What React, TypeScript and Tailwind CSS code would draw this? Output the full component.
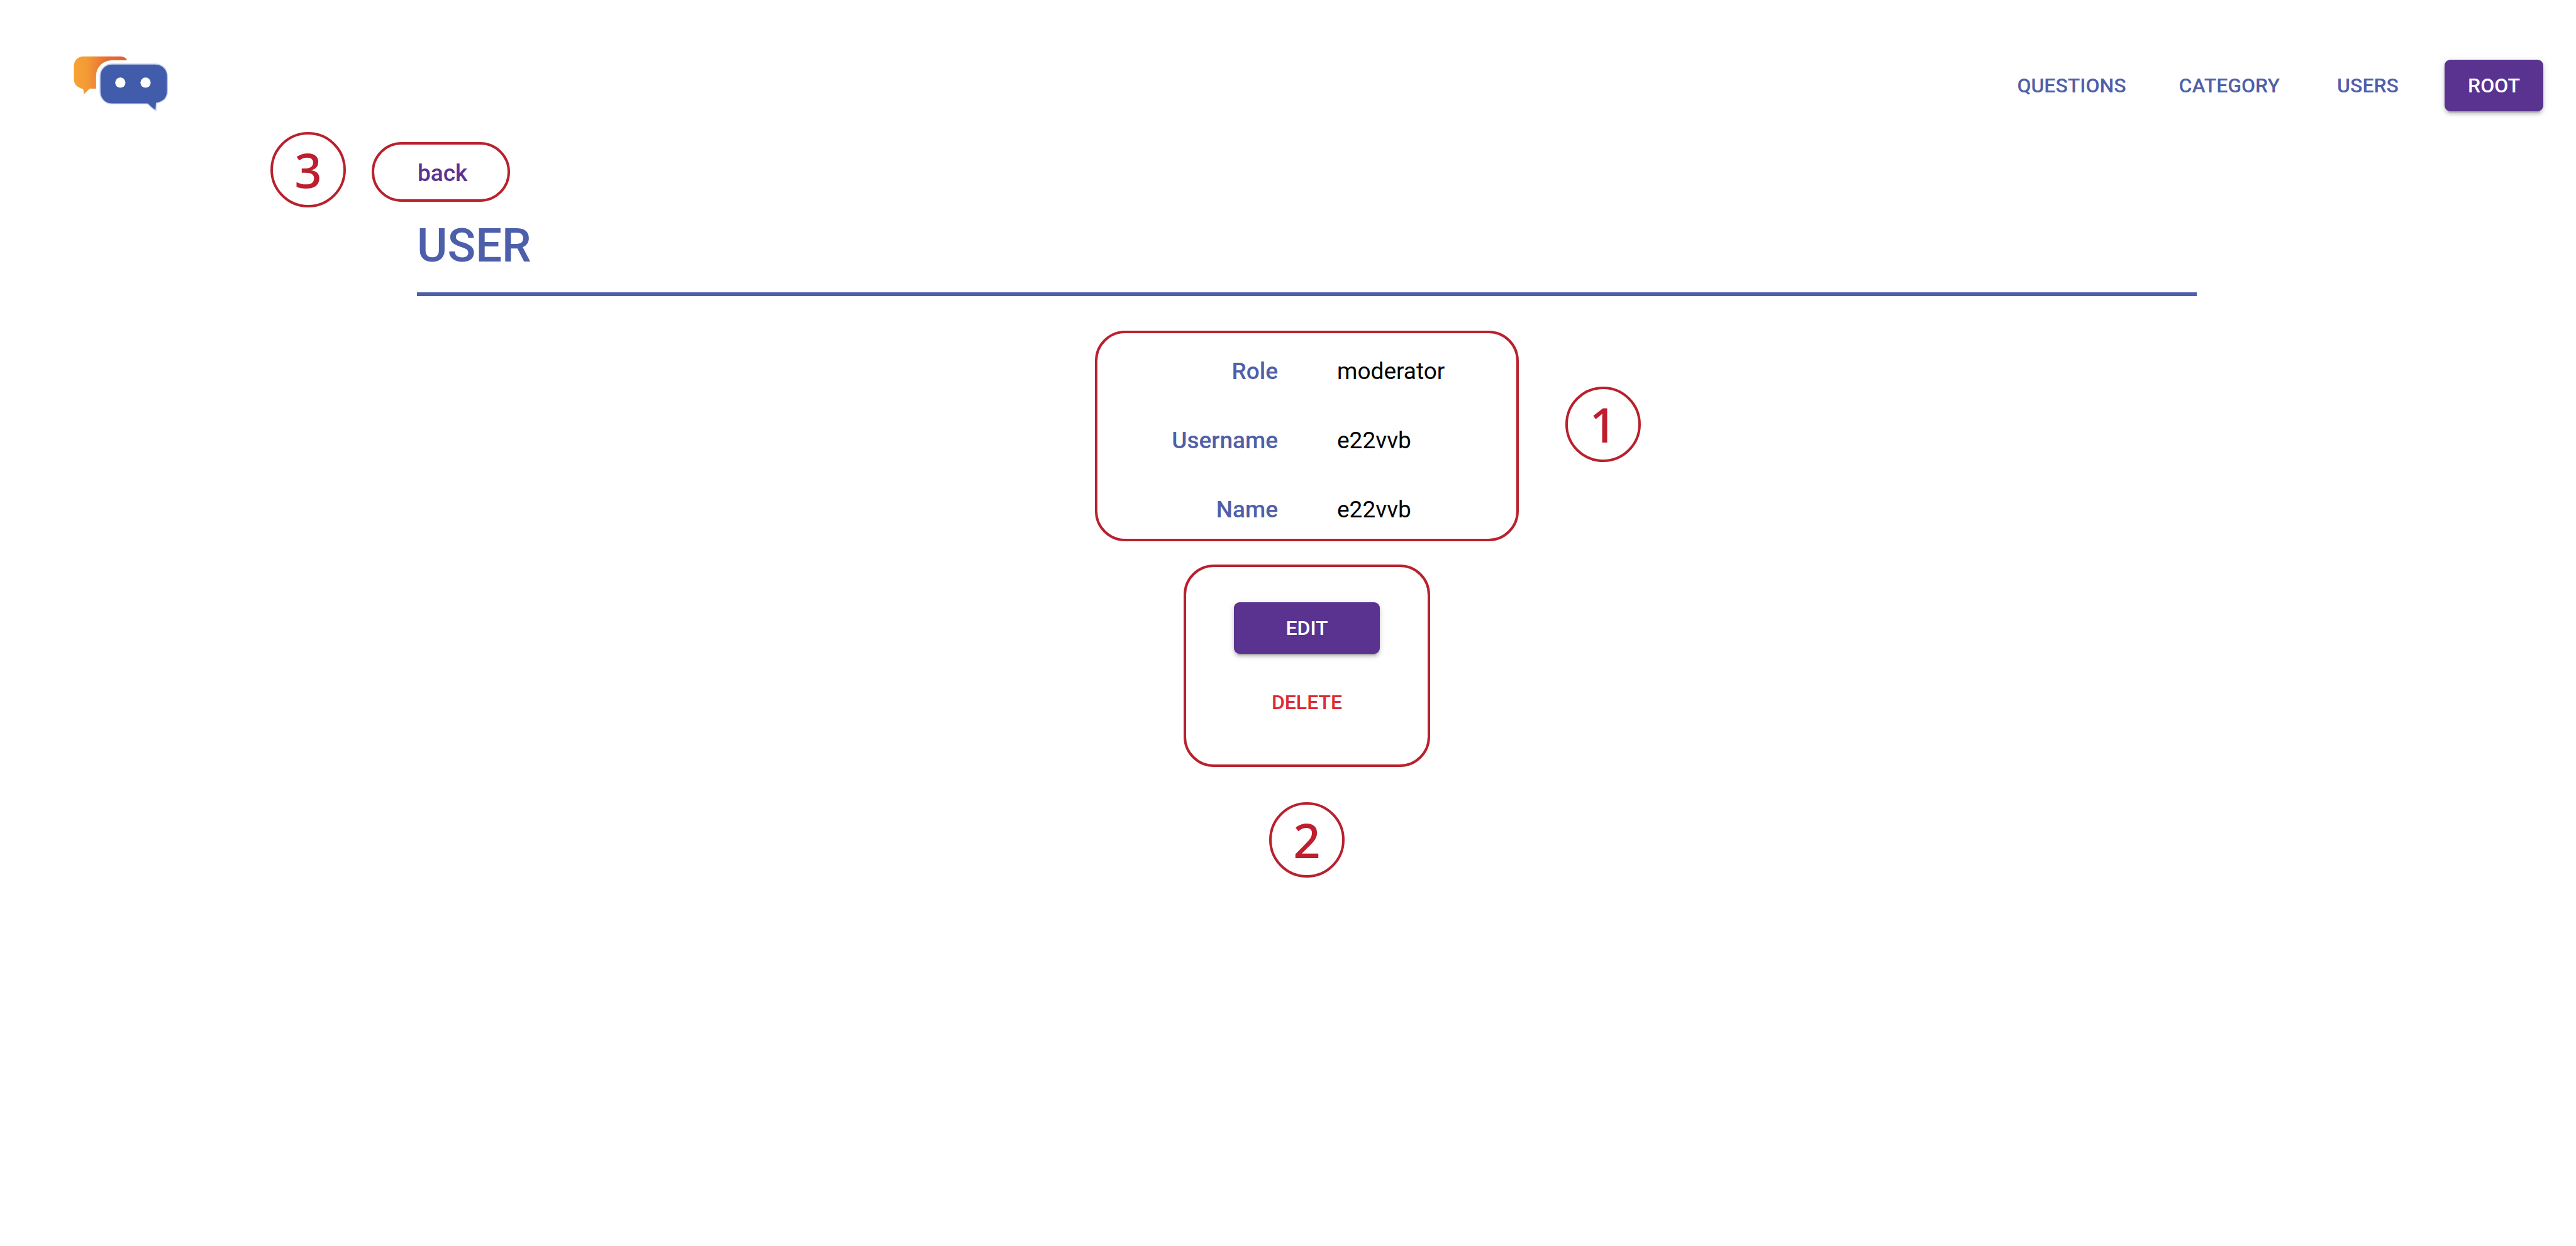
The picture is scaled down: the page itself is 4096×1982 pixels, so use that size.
import React from "react";

const NAV_LINKS = ["QUESTIONS", "CATEGORY", "USERS"];

const DETAILS = [
  { label: "Role", value: "moderator" },
  { label: "Username", value: "e22vvb" },
  { label: "Name", value: "e22vvb" },
];

const RAISED =
  "rounded-[9px] bg-[#5a3391] text-white shadow-[0_7px_2px_-5px_rgba(0,0,0,0.2),0_5px_5px_0_rgba(0,0,0,0.14),0_2px_12px_0_rgba(0,0,0,0.12)]";

function Logo() {
  return (
    <svg viewBox="80 80 505 295" className="h-[89px] w-[153px]" role="img" aria-label="Chat logo">
      <defs>
        <linearGradient id="bubble" x1="0" y1="0" x2="1" y2="0">
          <stop offset="0" stopColor="#f7a235" />
          <stop offset="0.25" stopColor="#f39a36" />
          <stop offset="0.6" stopColor="#e66f35" />
          <stop offset="1" stopColor="#e05a33" />
        </linearGradient>
      </defs>
      <path
        d="M138 86H328C348 86 360 92 368 106H290C238 108 206 142 204 190V256H170C162 262 154 275 140 285C138 276 138 266 136 257C108 252 87 234 87 206V138C87 108 108 86 138 86Z"
        fill="url(#bubble)"
      />
      <path
        d="M290 126H515C553 126 580 153 580 190V270C580 304 558 326 522 332C521 346 520 358 519 371C502 362 488 348 476 336H290C252 336 225 309 225 270V190C225 153 252 126 290 126Z"
        fill="#415caa"
        stroke="#c3cde8"
        strokeWidth="5"
      />
      <circle cx="332" cy="224" r="27" fill="#fff" />
      <circle cx="465" cy="224" r="27" fill="#fff" />
    </svg>
  );
}

function Marker({ n, className }: { n: number; className: string }) {
  return (
    <span
      className={`absolute flex size-[120px] items-center justify-center rounded-full border-4 border-[#b8212d] font-['Noto_Sans',sans-serif] text-[76px] leading-none font-medium text-[#be1e2d] ${className}`}
    >
      {n}
    </span>
  );
}

export default function App() {
  return (
    <div className="min-h-screen bg-white font-[Roboto,sans-serif] font-medium">
      <header className="flex items-end justify-between pt-[88px] pr-[52px] pl-[115px]">
        <a href="#home">
          <Logo />
        </a>
        <nav className="flex items-center gap-12 text-[32px] leading-[82px] text-[#4f5fa9]">
          {NAV_LINKS.map((name) => (
            <a key={name} href={`#${name.toLowerCase()}`} className="min-w-[148px] px-[18px] text-center">
              {name}
            </a>
          ))}
          <button type="button" className={`px-[37px] ${RAISED}`}>
            ROOT
          </button>
        </nav>
      </header>

      <main className="flex flex-col pt-[49px] pr-[603px] pl-[663px]">
        <div className="relative -ml-[72px] self-start">
          <Marker n={3} className="right-full bottom-[-9px] mr-[41px]" />
          <a
            href="#users"
            className="block rounded-full border-4 border-[#b8212d] pt-1 pr-16 pl-[69px] text-[37px] leading-[83px] text-[#5a3391]"
          >
            back
          </a>
        </div>

        <h1 className="mt-[26px] border-b-[6px] border-[#4d5fab] pb-[30px] text-[74px] leading-[88px] text-[#4d5fab]">
          USER
        </h1>

        <section className="relative mt-[55px] self-center rounded-[48px] border-4 border-[#b8212d] pt-[39px] pb-6">
          <dl className="grid w-[666px] grid-cols-[287px_1fr] gap-x-[94px] gap-y-[66px] text-[37px] leading-[44px]">
            {DETAILS.map(({ label, value }) => (
              <React.Fragment key={label}>
                <dt className="text-right text-[#4f5fa9]">{label}</dt>
                <dd className="font-normal text-black">{value}</dd>
              </React.Fragment>
            ))}
          </dl>
          <Marker n={1} className="top-[85px] left-full ml-[78px]" />
        </section>

        <section className="relative mt-[37px] flex flex-col items-center gap-9 self-center rounded-[48px] border-4 border-[#b8212d] px-[76px] pt-14 pb-[58px] text-[32px] leading-[82px]">
          <button type="button" className={`w-[232px] ${RAISED}`}>
            EDIT
          </button>
          <button type="button" className="w-[232px] text-[#dc2a35]">
            DELETE
          </button>
          <Marker n={2} className="top-full mt-[60px]" />
        </section>
      </main>
    </div>
  );
}
